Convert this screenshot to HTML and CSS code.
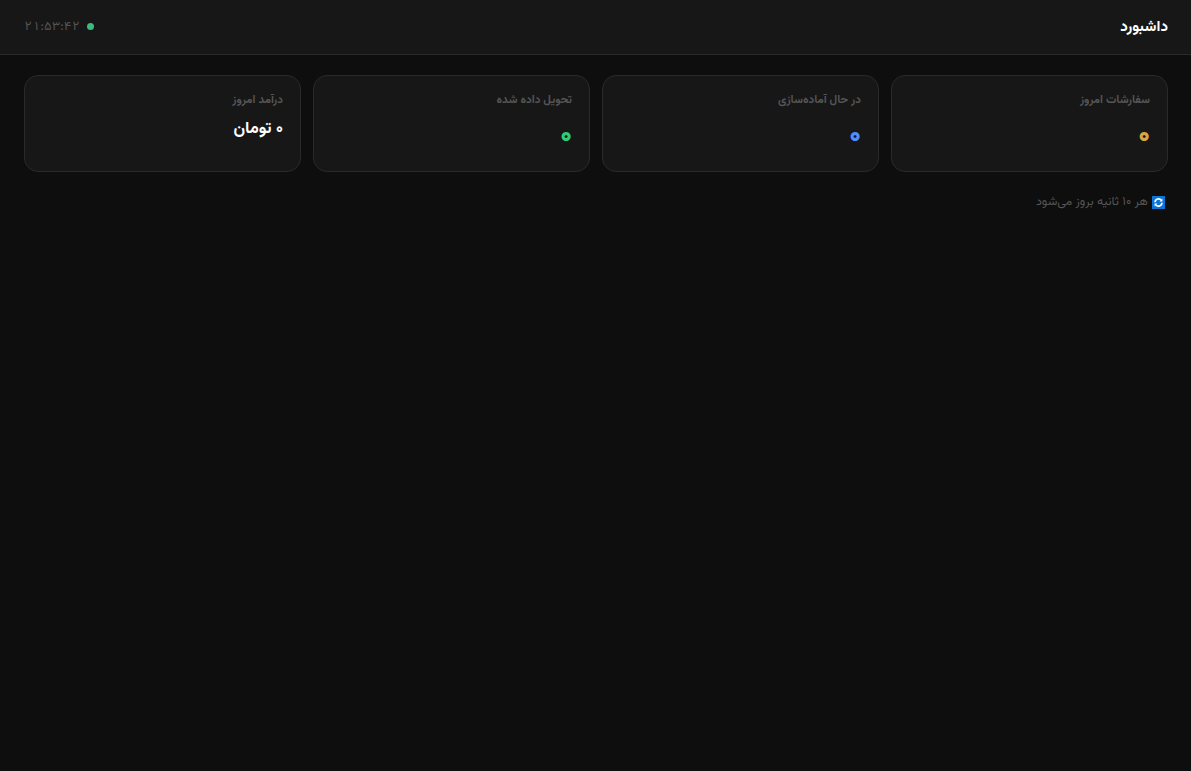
FILE: index.html
```html
<!DOCTYPE html>
<html lang="fa" dir="rtl">
<head>
<meta charset="utf-8">
<title>داشبورد</title>
<link rel="stylesheet" href="styles.css">
</head>
<body>
<header class="topbar">
  <h1 class="title">داشبورد</h1>
  <div class="status">
    <span class="dot"></span>
    <span class="clock">۲۱:۵۳:۴۲</span>
  </div>
</header>
<main class="content">
  <section class="stats">
    <article class="card">
      <div class="label">سفارشات امروز</div>
      <div class="value value-amber">۰</div>
    </article>
    <article class="card">
      <div class="label">در حال آماده‌سازی</div>
      <div class="value value-blue">۰</div>
    </article>
    <article class="card">
      <div class="label">تحویل داده شده</div>
      <div class="value value-green">۰</div>
    </article>
    <article class="card">
      <div class="label">درآمد امروز</div>
      <div class="value value-money">۰ تومان</div>
    </article>
  </section>
  <p class="note">
    <svg class="refresh" viewBox="0 0 13 13" width="13" height="13" aria-hidden="true">
      <rect width="13" height="13" fill="#0a74da"/>
      <path d="M3 6.2A3.5 3.5 0 0 1 9.4 4.4M10 6.8A3.5 3.5 0 0 1 3.6 8.6" fill="none" stroke="#fff" stroke-width="1.6"/>
      <path d="M10.4 2.6V5.4H7.6zM2.6 10.4V7.6H5.4z" fill="#fff"/>
    </svg>
    <span>هر ۱۰ ثانیه بروز می‌شود</span>
  </p>
</main>
</body>
</html>
```

FILE: styles.css
```css
* { box-sizing: border-box; }
html, body { height: 100%; }
body {
  margin: 0;
  background: #0e0e0e;
  color: #fff;
  font-family: Vazirmatn, "DejaVu Sans", sans-serif;
}
.topbar {
  height: 55px;
  display: flex;
  align-items: center;
  justify-content: space-between;
  padding: 0 23px 0 24px;
  background: #171717;
  border-bottom: 1px solid #2a2a2a;
}
.title {
  margin: 0;
  font-size: 15.2px;
  font-weight: 700;
  color: #fff;
}
.status {
  display: flex;
  align-items: center;
  gap: 7px;
}
.dot {
  width: 7px;
  height: 7px;
  margin-bottom: 1px;
  border-radius: 50%;
  background: #3dba7c;
}
.clock {
  font-size: 12.48px;
  font-variant-numeric: tabular-nums;
  color: #555;
}
.content { padding: 20px 23px 20px 24px; }
.stats {
  display: grid;
  grid-template-columns: repeat(4, 1fr);
  gap: 12px;
}
.card {
  height: 97px;
  padding: 16px 17px;
  background: #171717;
  border: 1px solid #2a2a2a;
  border-radius: 14px;
}
.label {
  font-size: 11.52px;
  font-weight: 700;
  line-height: 16px;
  color: #555;
}
.value {
  margin-top: 10px;
  font-size: 26px;
  font-weight: 900;
  line-height: 38px;
}
.value-amber { color: #d4a843; }
.value-blue { color: #4f8ef7; }
.value-green { color: #2ecc7a; }
.value-money {
  margin-top: 8px;
  font-size: 16.64px;
  font-weight: 700;
  line-height: 26px;
  color: #fff;
}
.note {
  display: flex;
  align-items: center;
  gap: 4px;
  margin: 20px 3px 0 0;
  font-size: 12.48px;
  line-height: 20px;
  color: #555;
}
.refresh { flex: none; }
```
